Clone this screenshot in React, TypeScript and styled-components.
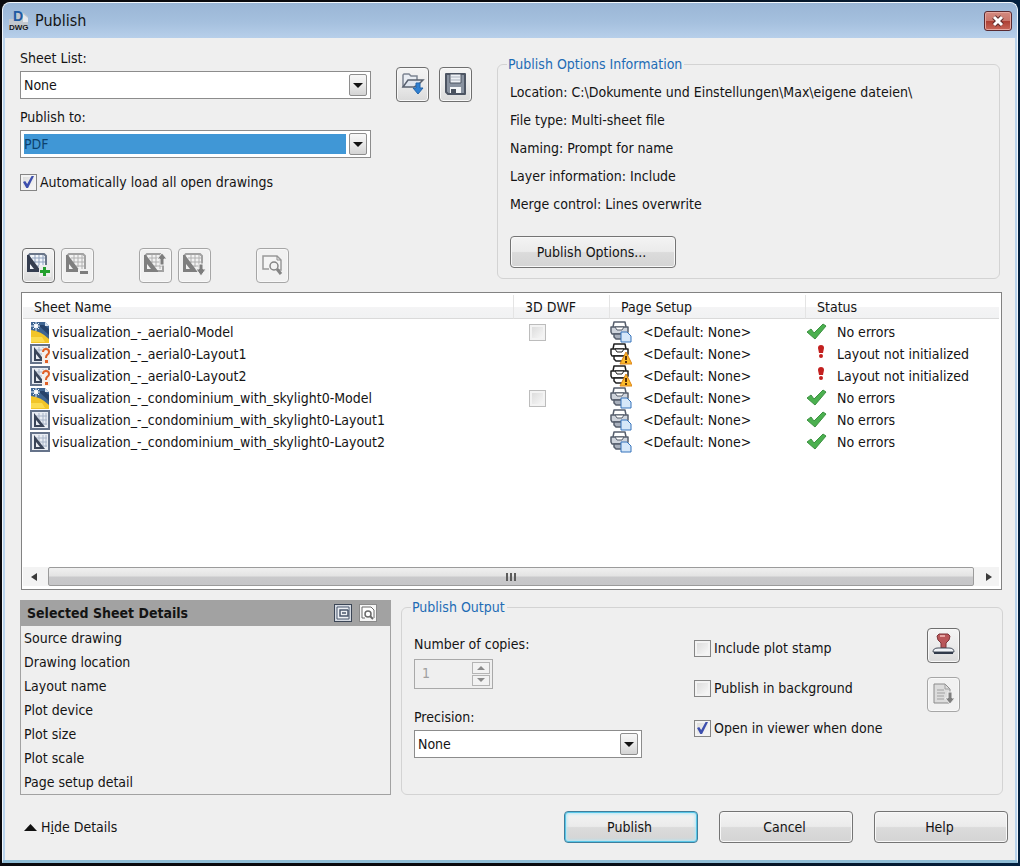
import React, { useState } from 'react';
import styled, { createGlobalStyle } from 'styled-components';

const GlobalStyle = createGlobalStyle`
  *, *::before, *::after { box-sizing: border-box; }
  html { background: #0a0d14; }
  body {
    margin: 0;
    font-family: "DejaVu Sans Condensed", Tahoma, "DejaVu Sans", sans-serif;
    font-size: 14px;
    line-height: 20px;
    color: #141414;
  }
  button, input, select { font: inherit; color: inherit; }
`;

const Desktop = styled.div`
  min-height: 100vh;
  padding: 2px 2px 3px;
  display: flex;
  background: linear-gradient(to right, #0a0a0e, #0a0a0e 50%, #03203f);
`;

const Window = styled.div`
  flex: 1;
  min-width: 960px;
  display: flex;
  flex-direction: column;
  border-radius: 8px 8px 0 0;
  border: 1px solid #f2f7fc;
  border-bottom: 3px solid #8fbdd6;
  background: #b9d3ec;
  padding: 0 2px;
  overflow: hidden;
`;

const TitleBar = styled.header`
  height: 35px;
  margin: 0 -2px;
  padding: 0 5px;
  display: flex;
  align-items: center;
  gap: 3px;
  background: linear-gradient(#9ab6d6, #a5c0de 55%, #b7cfea);
`;

const Title = styled.h1`
  margin: 0;
  flex: 1;
  font-size: 16px;
  font-weight: normal;
`;

const CloseButton = styled.button`
  width: 28px;
  height: 20px;
  padding: 0;
  display: grid;
  place-items: center;
  border: 1px solid #5a2a30;
  border-radius: 3px;
  box-shadow: inset 0 0 0 1px #e5a79f;
  background: linear-gradient(#d48a80, #c9766b 48%, #ad4034 52%, #c9675a);
`;

const Body = styled.main`
  flex: 1;
  display: flex;
  flex-direction: column;
  padding: 10px 7px 17px 15px;
  background: #efefef;
`;

const TopArea = styled.div`
  display: flex;
  margin-right: 8px;
`;

const Settings = styled.div`
  width: 351px;
  display: flex;
  flex-direction: column;
`;

const Field = styled.div`
  display: flex;
  flex-direction: column;
  align-items: flex-start;
  gap: 3px;
`;

const SettingsField = styled(Field)`
  align-items: stretch;
  margin-bottom: 8px;
`;

const SelectBox = styled.div`
  display: grid;
  height: 28px;
  border: 1px solid #8c8c8c;
  box-shadow: inset 0 0 0 1px #d6d6d6;
  background: #fff;
`;

const NativeSelect = styled.select<{ $active?: boolean }>`
  grid-area: 1 / 1;
  appearance: none;
  width: 100%;
  height: 26px;
  padding: 0;
  border: 0 solid #fff;
  border-width: 3px 24px 3px 3px;
  border-radius: 0;
  line-height: 20px;
  background: ${p => (p.$active ? '#4097d6' : '#fff')};
  color: ${p => (p.$active ? '#0d426e' : '#141414')};
  background-clip: padding-box;
  outline: none;
`;

const DropArrow = styled.span`
  grid-area: 1 / 1;
  justify-self: end;
  align-self: center;
  width: 18px;
  height: 22px;
  margin-right: 3px;
  display: grid;
  place-items: center;
  border: 1px solid #8e8e8e;
  border-radius: 2px;
  background: linear-gradient(#f7f7f7, #e9e9e9 50%, #d4d4d4);
  pointer-events: none;
`;

const CheckLabel = styled.label`
  display: flex;
  align-items: center;
  gap: 3px;
`;

const CheckBox = styled.input.attrs({ type: 'checkbox' })<{ $flat?: boolean }>`
  appearance: none;
  flex: none;
  width: 17px;
  height: 17px;
  margin: 0;
  display: grid;
  place-items: center;
  border: 1px solid ${p => (p.$flat ? '#bcbcbc' : '#858585')};
  background: linear-gradient(135deg, #d8d8d8, #fbfbfb);
  box-shadow: inset 0 0 0 2px #f3f3f3;

  &:checked::after {
    content: '';
    width: 11px;
    height: 12px;
    background: #3d4fae;
    clip-path: polygon(0 50%, 20% 42%, 38% 66%, 78% 0, 100% 0, 46% 100%, 30% 100%);
  }
`;

const LoadOption = styled.div`
  padding-top: 6px;
`;

const Toolbar = styled.div`
  display: flex;
  margin-top: auto;
  padding-left: 2px;
  gap: 6px;
`;

const ToolGroup = styled.div`
  display: flex;
  gap: 6px;
  margin-right: 39px;
`;

const FileTools = styled.div`
  display: flex;
  gap: 10px;
  margin: 19px 25px 0 25px;
`;

const IconButton = styled.button`
  width: 33px;
  height: 35px;
  padding: 0 0 2px;
  display: grid;
  place-items: center;
  border: 1px solid #6f6f6f;
  border-radius: 4px;
  box-shadow: inset 0 0 0 1px #f8f8f8;
  background: linear-gradient(#f4f4f4, #ebebeb 50%, #dadada);

  &:disabled {
    border-color: #a6a6a6;
    background: #f1f1f1;
  }
`;

const Group = styled.fieldset`
  margin: 0;
  min-width: 0;
  padding: 0 9px 10px;
  border: 1px solid #d3d3d3;
  border-radius: 6px;
`;

const GroupTitle = styled.legend`
  padding: 0 2px 0 1px;
  color: #1e6cb5;
`;

const InfoGroup = styled(Group)`
  flex: 1;
  margin: 6px 0 4px;
`;

const InfoList = styled.ul`
  list-style: none;
  margin: 4px 0 18px;
  padding: 0 3px;
  line-height: 28px;
`;

const PushButton = styled.button<{ $primary?: boolean; $width?: number }>`
  width: ${p => p.$width ?? 134}px;
  height: 32px;
  padding: 0 3px 0 0;
  border: 1px solid ${p => (p.$primary ? '#3f7f9c' : '#747474')};
  border-radius: 4px;
  box-shadow: ${p =>
    p.$primary ? 'inset 0 0 0 1px #58c6e8, inset 0 0 3px 2px #b5e7f5' : 'inset 0 0 0 1px #f8f8f8'};
  background: linear-gradient(#f3f3f3, #ebebeb 48%, #dbdbdb 52%, #d4d4d4);
`;

const OptionsButton = styled(PushButton)`
  margin-left: 3px;
`;

const SheetPane = styled.section`
  flex: 1;
  min-height: 200px;
  margin: 9px 6px 10px 1px;
  padding: 2px 2px 3px 1px;
  display: flex;
  flex-direction: column;
  border: 1px solid #828282;
  background: #fff;
`;

const SheetTable = styled.table`
  width: 100%;
  table-layout: fixed;
  border-collapse: separate;
  border-spacing: 0;
`;

const HeadCell = styled.th<{ $width?: number }>`
  width: ${p => (p.$width ? `${p.$width}px` : 'auto')};
  height: 24px;
  padding: 0 0 0 11px;
  text-align: left;
  font-weight: normal;
  border-right: 1px solid #e4e4e4;
  border-bottom: 1px solid #dadada;
  background: linear-gradient(#fff, #fff 50%, #f4f4f5 52%, #f1f2f3);

  &:last-child { border-right: 0; }
`;

const Cell = styled.td`
  height: 22px;
  padding: 0;
`;

const CellLine = styled.div<{ $gap: number; $indent?: number }>`
  height: 22px;
  display: flex;
  align-items: center;
  gap: ${p => p.$gap}px;
  padding-left: ${p => p.$indent ?? 0}px;
  white-space: nowrap;

  svg { flex: none; }
`;

const TableRows = styled.tbody`
  &::before {
    content: '';
    display: table-row;
    height: 2px;
  }
`;

const ScrollBar = styled.div`
  height: 19px;
  margin-top: auto;
  display: flex;
  background: #f3f3f3;
`;

const ScrollArrow = styled.button`
  width: 25px;
  padding: 0;
  display: grid;
  place-items: center;
  border: 0;
  background: none;
`;

const ScrollThumb = styled.div`
  flex: 1;
  display: flex;
  align-items: center;
  justify-content: center;
  gap: 2px;
  border: 1px solid #9b9b9b;
  border-radius: 2px;
  background: linear-gradient(#f0f0f0, #e4e4e4 45%, #c9c9cb 55%, #c6c6c8);
`;

const Grip = styled.i`
  width: 2px;
  height: 8px;
  background: #5c5c5c;
`;

const BottomArea = styled.div`
  display: flex;
  align-items: stretch;
  gap: 10px;
  margin-right: 5px;
`;

const Details = styled.section`
  width: 371px;
  border: 1px solid #a2a2a2;
  border-top: 0;
`;

const DetailsHead = styled.div`
  height: 26px;
  display: flex;
  align-items: center;
  gap: 7px;
  padding: 0 13px 0 6px;
  background: #a2a2a2;
`;

const DetailsTitle = styled.h2`
  margin: 0;
  flex: 1;
  font-size: 14px;
`;

const TinyButton = styled.button<{ $pressed?: boolean }>`
  width: 18px;
  height: 18px;
  padding: 0;
  display: grid;
  place-items: center;
  border: 1px solid ${p => (p.$pressed ? '#3c4656' : '#8a8a8a')};
  background: ${p => (p.$pressed ? '#d5dae2' : '#f6f6f6')};
`;

const DetailList = styled.ul`
  list-style: none;
  margin: 0;
  padding: 0 3px;
  line-height: 24px;
`;

const OutputGroup = styled(Group)`
  flex: 1;
  margin-top: -3px;
  padding: 16px 9px 0 12px;
`;

const OutputTitle = styled(GroupTitle)`
  margin-left: -3px;
`;

const OutputGrid = styled.div`
  display: flex;
`;

const OutputFields = styled.div`
  width: 228px;
  display: flex;
  flex-direction: column;
  gap: 18px;
  padding-top: 1px;
`;

const PrecisionField = styled(Field)`
  align-items: stretch;
`;

const Spinner = styled.div`
  width: 79px;
  height: 30px;
  margin-top: 2px;
  padding: 2px;
  display: flex;
  border: 1px solid #a9a9a9;
`;

const SpinInput = styled.input`
  flex: 1;
  min-width: 0;
  padding: 0 0 3px 5px;
  border: 0;
  background: none;
  color: #a0a0a0;
`;

const SpinButtons = styled.div`
  display: flex;
  flex-direction: column;
  gap: 1px;
`;

const SpinButton = styled.button`
  width: 18px;
  flex: 1;
  padding: 0;
  display: grid;
  place-items: center;
  border: 1px solid #b4b4b4;
  background: #f2f2f2;
`;

const OutputChecks = styled.div`
  flex: 1;
  display: flex;
  flex-direction: column;
  gap: 20px;
  padding: 5px 0 0 52px;
`;

const OutputTools = styled.div`
  display: flex;
  flex-direction: column;
  gap: 14px;
  margin: -5px 33px 0 0;
`;

const Footer = styled.footer`
  display: flex;
  align-items: center;
  gap: 21px;
  margin-top: 16px;
`;

const HideDetails = styled.button`
  display: flex;
  align-items: center;
  gap: 4px;
  padding: 0;
  margin: 0 auto 0 4px;
  border: 0;
  background: none;
`;

const Mnemonic = styled.span`
  text-decoration: underline;
`;

/* ---------- icons ---------- */

const AppIcon = () => (
  <svg width="24" height="26" viewBox="0 0 24 26" aria-hidden="true">
    <path d="M1 11h5l1-6h9l4 4v12H1z" fill="#c3c8cf" />
    <path d="M15 6l5 4v4h-5z" fill="#e6e9ee" />
    <text x="5" y="13" fontFamily="Liberation Sans" fontWeight="bold" fontSize="14" fill="#1f5ba3">D</text>
    <text x="1" y="22" fontFamily="Liberation Sans" fontWeight="bold" fontSize="8" fill="#17181c">DWG</text>
  </svg>
);

const CloseIcon = () => (
  <svg width="14" height="12" viewBox="0 0 14 12" aria-hidden="true">
    <path d="M3 2l8 8M11 2l-8 8" stroke="#5b2a2a" strokeWidth="5" />
    <path d="M3 2l8 8M11 2l-8 8" stroke="#fff" strokeWidth="3" />
  </svg>
);

const DownTriangle = ({ size = 10, color = '#111' }) => (
  <svg width={size} height={size / 2} viewBox="0 0 10 5" aria-hidden="true">
    <path d="M0 0h10L5 5z" fill={color} />
  </svg>
);

const UpTriangle = ({ width = 13, height = 7, color = '#111' }) => (
  <svg width={width} height={height} viewBox="0 0 12 6" preserveAspectRatio="none" aria-hidden="true">
    <path d="M0 6h12L6 0z" fill={color} />
  </svg>
);

const SideTriangle = ({ right }: { right?: boolean }) => (
  <svg width="10" height="10" viewBox="0 0 10 10" aria-hidden="true">
    <path d={right ? 'M4 1v8l6-4z' : 'M6 1v8L0 5z'} fill="#3b3b3b" />
  </svg>
);

const OpenListIcon = () => (
  <svg width="24" height="24" viewBox="0 0 24 24" fill="none" aria-hidden="true">
    <path d="M2 15V3l1-1h5l2 2h6v4" fill="#e9edf3" stroke="#7d8592" strokeWidth="1.5" />
    <path d="M2 15l5-7h15l-5 5-4 2z" fill="#dfe5ee" stroke="#59616f" strokeWidth="1.5" />
    <path d="M15 11h4v5h3l-5 6-5-6h3z" fill="#2f80d2" stroke="#2465aa" />
  </svg>
);

const SaveIcon = () => (
  <svg width="24" height="24" viewBox="0 0 24 24" fill="none" aria-hidden="true">
    <path d="M2 2h19v20H4l-2-2z" fill="#8992a0" stroke="#4d5563" strokeWidth="2" strokeLinejoin="round" />
    <path d="M6 2h11v9H6z" fill="#eef1f5" stroke="#4d5563" />
    <path d="M7 5h9M7 8h9" stroke="#a9b1bd" />
    <path d="M6 15h11v6H6z" fill="#f4f6f8" />
    <path d="M7 17h5v4H7z" fill="#4a525f" />
  </svg>
);

type Tone = { line: string; frame: string; grid: string; fill: string };
const strong: Tone = { line: '#343d50', frame: '#6a7689', grid: '#8fa1bd', fill: '#f1f5fa' };
const muted: Tone = { line: '#7f7f7f', frame: '#a2a2a2', grid: '#b0b0b0', fill: '#f2f2f2' };

const SheetGlyph = ({ tone }: { tone: Tone }) => (
  <g>
    <path d="M1 18V3l2-2h14l2 2v15z" fill={tone.fill} stroke={tone.frame} strokeWidth="2" />
    <path d="M8 2v8M12 2v12M16 2v14M5 5h13M7 9h11M10 13h8" stroke={tone.grid} fill="none" />
    <path d="M0 19V2h2l12 16v1z" fill={tone.line} />
    <path d="M3 16v-5l4 5z" fill={tone.fill} />
  </g>
);

const SheetToolIcon = ({ kind }: { kind: 'add' | 'remove' | 'up' | 'down' }) => (
  <svg width="24" height="24" viewBox="0 0 24 24" aria-hidden="true">
    <SheetGlyph tone={kind === 'add' ? strong : muted} />
    {kind === 'add' && (
      <g>
        <path d="M12 12h12v12H12z" fill="#ececec" />
        <path d="M16 14h3v3h4v3h-4v3h-3v-3h-3v-3h3z" fill="#23a02c" />
      </g>
    )}
    {kind === 'remove' && <path d="M13 17h10v5H13z" fill="#7d7d7d" stroke="#f1f1f1" strokeWidth="2" />}
    {kind === 'up' && <path d="M18 0l5 6h-3v6h-4V6h-3z" fill="#7d7d7d" stroke="#f1f1f1" />}
    {kind === 'down' && <path d="M16 11h4v5h3l-5 7-5-7h3z" fill="#7d7d7d" stroke="#f1f1f1" />}
  </svg>
);

const PreviewIcon = () => (
  <svg width="22" height="22" viewBox="0 0 22 22" fill="none" aria-hidden="true">
    <path d="M7 15H1V2h14l4 4v10h-3" stroke="#999" fill="#f4f4f4" strokeWidth="1.5" />
    <path d="M15 2v4h4" stroke="#8d8d8d" />
    <circle cx="12" cy="12" r="4" stroke="#858585" strokeWidth="1.5" fill="#f4f4f4" />
    <path d="M15 15l4 5" stroke="#858585" strokeWidth="3" />
  </svg>
);

const ModelIcon = () => (
  <svg width="20" height="21" viewBox="0 0 20 21" aria-hidden="true">
    <path d="M1 0h14l4 4v16H1z" fill="#3f6592" />
    <path d="M8 3h6l5 4v6z" fill="#26436b" />
    <path d="M15 0v4h4z" fill="#d9e4f0" />
    <path d="M1 8q10 1 18 9v4H1z" fill="#f2c528" />
    <path d="M1 15h11l3 5H1z" fill="#fbdc50" />
    <path d="M6 0v9M1 4h9M3 1l6 6M9 1L3 7" stroke="#e6f1fa" />
    <circle cx="6" cy="4" r="2" fill="#fff" />
  </svg>
);

const LayoutIcon = ({ unknown }: { unknown?: boolean }) => (
  <svg width="20" height="20" viewBox="0 0 20 20" aria-hidden="true">
    <path d="M1 1h18v18H1z" fill="#e9edf3" stroke="#65738a" strokeWidth="2" />
    <path d="M9 3v8M13 3v12M16 3v12M6 6h11M9 10h8M12 14h5" stroke="#a9b5c8" fill="none" />
    <path d="M4 17V3l11 14z" fill="#3a4559" />
    <path d="M6 15v-5l4 5z" fill="#e9edf3" />
    {unknown && (
      <g>
        <path d="M12 4h8v16h-8z" fill="#f4efec" />
        <path d="M13 8q0-3 3-3t3 3q0 2-2 3-1 1-1 3" stroke="#df5f26" strokeWidth="2" fill="none" />
        <path d="M15 16h3v3h-3z" fill="#df5f26" />
      </g>
    )}
  </svg>
);

const PrinterIcon = ({ warn }: { warn?: boolean }) => {
  const outline = warn ? '#1f1f1f' : '#565e6c';
  return (
    <svg width="22" height="22" viewBox="0 0 22 22" fill="none" aria-hidden="true">
      <path d="M3 6l1-5h11l1 5" fill="#fff" stroke={outline} strokeWidth="1.5" strokeLinejoin="round" />
      <path d="M1 6h17v5l-1 2H2l-1-2z" fill={warn ? '#fff' : '#cfd4dc'} stroke={outline} strokeWidth="1.5" strokeLinejoin="round" />
      <path d="M5 6l2 3h5l2-3z" fill="#fff" stroke={outline} />
      <path d="M4 13v3l2 2h8v-5z" fill={warn ? '#fff' : '#a9b0bc'} stroke={outline} strokeWidth="1.5" />
      {warn ? (
        <g>
          <path d="M16 9l6 12H10z" fill="#fbbb2c" stroke="#dd8416" strokeLinejoin="round" />
          <path d="M16 13v4M16 18v2" stroke="#5a2e05" strokeWidth="2" />
        </g>
      ) : (
        <path d="M11 11h6l4 4v6H11z" fill="#d5e7f9" stroke="#3573bb" strokeLinejoin="round" />
      )}
    </svg>
  );
};

const OkIcon = () => (
  <svg width="21" height="18" viewBox="0 0 21 18" aria-hidden="true">
    <path d="M1 9l4-3 3 4L17 1l3 2L9 16z" fill="#4bb04f" stroke="#3d9142" strokeLinejoin="round" />
  </svg>
);

const AlertIcon = () => (
  <svg width="21" height="20" viewBox="0 0 21 20" aria-hidden="true">
    <path d="M15 1q3 0 3 3l-1 5h-4l-1-5q0-3 3-3z" fill="#c3201f" />
    <circle cx="15" cy="12" r="2" fill="#c3201f" />
  </svg>
);

const DetailsViewIcon = () => (
  <svg width="14" height="14" viewBox="0 0 14 14" fill="none" stroke="#4b586e" aria-hidden="true">
    <path d="M1 1h12v12H1z" fill="#eef1f5" />
    <path d="M12 4H4v6h8V4M6 7h4" strokeWidth="1.5" />
  </svg>
);

const PreviewSmallIcon = () => (
  <svg width="14" height="14" viewBox="0 0 14 14" fill="none" stroke="#6a6a6a" aria-hidden="true">
    <path d="M4 12H1V1h9l3 3v8" fill="#fff" />
    <circle cx="7" cy="8" r="3" strokeWidth="1.5" fill="#fff" />
    <path d="M9 10l3 3" strokeWidth="2" />
  </svg>
);

const StampIcon = () => (
  <svg width="24" height="24" viewBox="0 0 24 24" aria-hidden="true">
    <path d="M7 1h9l2 2-1 4-3 3v5H9v-5L6 7 5 3z" fill="#b9575a" stroke="#7d3439" />
    <path d="M8 3h5" stroke="#e6a4a2" strokeWidth="2" />
    <path d="M1 19q0-4 5-4h11q5 0 5 4z" fill="#f0f3f7" stroke="#464e5b" />
    <path d="M2 20h19" stroke="#313a4a" strokeWidth="2" />
  </svg>
);

const ExportIcon = () => (
  <svg width="24" height="24" viewBox="0 0 24 24" fill="none" aria-hidden="true">
    <path d="M2 2h11l5 5v14H2z" fill="#dcdcdc" stroke="#8b8b8b" />
    <path d="M13 2v5h5M5 8h7M5 11h8M5 14h7M5 17h7" stroke="#a0a0a0" />
    <path d="M16 10h4v6h3l-5 6-5-6h3z" fill="#7f7f7f" stroke="#f1f1f1" />
  </svg>
);

/* ---------- content ---------- */

const rows = [
  { name: 'visualization_-_aerial0-Model', model: true, ok: true },
  { name: 'visualization_-_aerial0-Layout1', model: false, ok: false },
  { name: 'visualization_-_aerial0-Layout2', model: false, ok: false },
  { name: 'visualization_-_condominium_with_skylight0-Model', model: true, ok: true },
  { name: 'visualization_-_condominium_with_skylight0-Layout1', model: false, ok: true },
  { name: 'visualization_-_condominium_with_skylight0-Layout2', model: false, ok: true },
];

const info = [
  'Location: C:\\Dokumente und Einstellungen\\Max\\eigene dateien\\',
  'File type: Multi-sheet file',
  'Naming: Prompt for name',
  'Layer information: Include',
  'Merge control: Lines overwrite',
];

const details = [
  'Source drawing',
  'Drawing location',
  'Layout name',
  'Plot device',
  'Plot size',
  'Plot scale',
  'Page setup detail',
];

type DropDownProps = { id: string; value: string; active?: boolean };
const DropDown = ({ id, value, active }: DropDownProps) => (
  <SelectBox>
    <NativeSelect id={id} $active={active} defaultValue={value}>
      <option>{value}</option>
    </NativeSelect>
    <DropArrow>
      <DownTriangle />
    </DropArrow>
  </SelectBox>
);

type CheckProps = { label: string; initial?: boolean };
const Check = ({ label, initial = false }: CheckProps) => {
  const [on, setOn] = useState(initial);
  return (
    <CheckLabel>
      <CheckBox checked={on} onChange={e => setOn(e.target.checked)} />
      {label}
    </CheckLabel>
  );
};

export default function App() {
  return (
    <Desktop>
      <GlobalStyle />
      <Window>
        <TitleBar>
          <AppIcon />
          <Title>Publish</Title>
          <CloseButton aria-label="Close">
            <CloseIcon />
          </CloseButton>
        </TitleBar>
        <Body>
          <TopArea>
            <Settings>
              <SettingsField>
                <label htmlFor="sheet-list">Sheet List:</label>
                <DropDown id="sheet-list" value="None" />
              </SettingsField>
              <SettingsField>
                <label htmlFor="publish-to">Publish to:</label>
                <DropDown id="publish-to" value="PDF" active />
              </SettingsField>
              <LoadOption>
                <Check label="Automatically load all open drawings" initial />
              </LoadOption>
              <Toolbar>
                <ToolGroup>
                  <IconButton aria-label="Add sheets"><SheetToolIcon kind="add" /></IconButton>
                  <IconButton aria-label="Remove sheets" disabled><SheetToolIcon kind="remove" /></IconButton>
                </ToolGroup>
                <ToolGroup>
                  <IconButton aria-label="Move sheet up" disabled><SheetToolIcon kind="up" /></IconButton>
                  <IconButton aria-label="Move sheet down" disabled><SheetToolIcon kind="down" /></IconButton>
                </ToolGroup>
                <IconButton aria-label="Preview" disabled><PreviewIcon /></IconButton>
              </Toolbar>
            </Settings>
            <FileTools>
              <IconButton aria-label="Load sheet list"><OpenListIcon /></IconButton>
              <IconButton aria-label="Save sheet list"><SaveIcon /></IconButton>
            </FileTools>
            <InfoGroup>
              <GroupTitle>Publish Options Information</GroupTitle>
              <InfoList>
                {info.map(line => <li key={line}>{line}</li>)}
              </InfoList>
              <OptionsButton $width={166}>Publish Options...</OptionsButton>
            </InfoGroup>
          </TopArea>

          <SheetPane>
            <SheetTable>
              <thead>
                <tr>
                  <HeadCell>Sheet Name</HeadCell>
                  <HeadCell $width={96}>3D DWF</HeadCell>
                  <HeadCell $width={196}>Page Setup</HeadCell>
                  <HeadCell $width={193}>Status</HeadCell>
                </tr>
              </thead>
              <TableRows>
                {rows.map(row => (
                  <tr key={row.name}>
                    <Cell>
                      <CellLine $gap={2} $indent={7}>
                        {row.model ? <ModelIcon /> : <LayoutIcon unknown={!row.ok} />}
                        {row.name}
                      </CellLine>
                    </Cell>
                    <Cell>
                      {row.model && (
                        <CellLine $gap={0} $indent={15}>
                          <CheckBox $flat aria-label={`3D DWF for ${row.name}`} />
                        </CellLine>
                      )}
                    </Cell>
                    <Cell>
                      <CellLine $gap={11}>
                        <PrinterIcon warn={!row.ok} />
                        {'<Default: None>'}
                      </CellLine>
                    </Cell>
                    <Cell>
                      <CellLine $gap={10}>
                        {row.ok ? <OkIcon /> : <AlertIcon />}
                        {row.ok ? 'No errors' : 'Layout not initialized'}
                      </CellLine>
                    </Cell>
                  </tr>
                ))}
              </TableRows>
            </SheetTable>
            <ScrollBar>
              <ScrollArrow aria-label="Scroll left"><SideTriangle /></ScrollArrow>
              <ScrollThumb><Grip /><Grip /><Grip /></ScrollThumb>
              <ScrollArrow aria-label="Scroll right"><SideTriangle right /></ScrollArrow>
            </ScrollBar>
          </SheetPane>

          <BottomArea>
            <Details>
              <DetailsHead>
                <DetailsTitle>Selected Sheet Details</DetailsTitle>
                <TinyButton $pressed aria-label="Show details"><DetailsViewIcon /></TinyButton>
                <TinyButton aria-label="Show preview"><PreviewSmallIcon /></TinyButton>
              </DetailsHead>
              <DetailList>
                {details.map(d => <li key={d}>{d}</li>)}
              </DetailList>
            </Details>
            <OutputGroup>
              <OutputTitle>Publish Output</OutputTitle>
              <OutputGrid>
                <OutputFields>
                  <Field>
                    <label htmlFor="copies">Number of copies:</label>
                    <Spinner>
                      <SpinInput id="copies" defaultValue="1" disabled />
                      <SpinButtons>
                        <SpinButton aria-label="More copies" disabled>
                          <UpTriangle width={8} height={4} color="#8a8a8a" />
                        </SpinButton>
                        <SpinButton aria-label="Fewer copies" disabled>
                          <DownTriangle size={8} color="#8a8a8a" />
                        </SpinButton>
                      </SpinButtons>
                    </Spinner>
                  </Field>
                  <PrecisionField>
                    <label htmlFor="precision">Precision:</label>
                    <DropDown id="precision" value="None" />
                  </PrecisionField>
                </OutputFields>
                <OutputChecks>
                  <Check label="Include plot stamp" />
                  <Check label="Publish in background" />
                  <Check label="Open in viewer when done" initial />
                </OutputChecks>
                <OutputTools>
                  <IconButton aria-label="Plot stamp settings"><StampIcon /></IconButton>
                  <IconButton aria-label="Export options" disabled><ExportIcon /></IconButton>
                </OutputTools>
              </OutputGrid>
            </OutputGroup>
          </BottomArea>

          <Footer>
            <HideDetails>
              <UpTriangle />
              <span>H<Mnemonic>i</Mnemonic>de Details</span>
            </HideDetails>
            <PushButton $primary>Publish</PushButton>
            <PushButton>Cancel</PushButton>
            <PushButton>Help</PushButton>
          </Footer>
        </Body>
      </Window>
    </Desktop>
  );
}
